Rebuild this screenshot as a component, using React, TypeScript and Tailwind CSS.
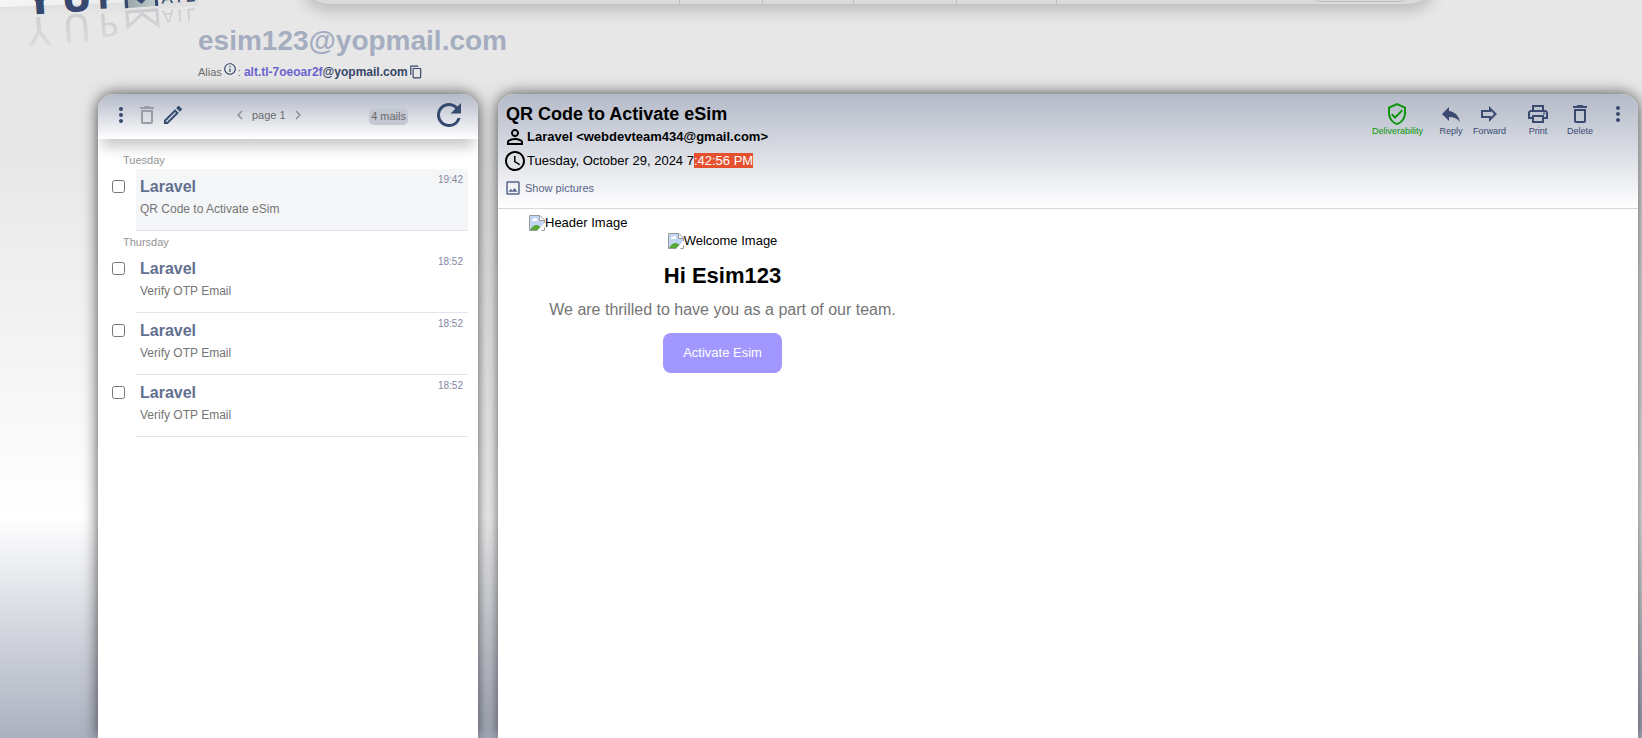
import type { ReactNode } from "react";
import {
  MdChevronLeft,
  MdChevronRight,
  MdContentCopy,
  MdDeleteOutline,
  MdInfoOutline,
  MdMoreVert,
  MdOutlineEdit,
  MdOutlineImage,
  MdOutlinePrint,
  MdPersonOutline,
  MdRefresh,
  MdReply,
  MdSchedule,
} from "react-icons/md";

type Mail = { id: number; from: string; subject: string; time: string; active?: boolean };

const days: { label: string; mails: Mail[] }[] = [
  {
    label: "Tuesday",
    mails: [{ id: 1, from: "Laravel", subject: "QR Code to Activate eSim", time: "19:42", active: true }],
  },
  {
    label: "Thursday",
    mails: [
      { id: 2, from: "Laravel", subject: "Verify OTP Email", time: "18:52" },
      { id: 3, from: "Laravel", subject: "Verify OTP Email", time: "18:52" },
      { id: 4, from: "Laravel", subject: "Verify OTP Email", time: "18:52" },
    ],
  },
];

function Letters() {
  return (
    <>
      <text x="26" y="14" fontSize="40">Y</text>
      <text x="62" y="14" fontSize="38">U</text>
      <text x="98" y="13" fontSize="32">P</text>
      <g fontWeight="400">
        <text x="162" y="12" fontSize="17">A</text>
        <text x="177" y="12" fontSize="17">I</text>
        <text x="186" y="12" fontSize="17">L</text>
      </g>
    </>
  );
}

function Logo() {
  return (
    <svg className="h-[50px] w-[198px] shrink-0" viewBox="0 0 198 50" aria-label="Yopmail" role="img">
      <defs>
        <linearGradient id="fade" gradientUnits="userSpaceOnUse" x1="0" y1="10" x2="0" y2="46">
          <stop offset="0" stopColor="#fff" stopOpacity="0.2" />
          <stop offset="1" stopColor="#fff" stopOpacity="0.08" />
        </linearGradient>
        <linearGradient id="glow" x1="0" y1="0" x2="1" y2="0">
          <stop offset="0" stopColor="#f5f5f5" />
          <stop offset="1" stopColor="#e7e7e7" />
        </linearGradient>
        <linearGradient id="floor" x1="0" y1="0" x2="0" y2="1">
          <stop offset="0" stopColor="#dcdcdc" />
          <stop offset="1" stopColor="#e7e7e7" stopOpacity="0" />
        </linearGradient>
        <linearGradient id="envelope" x1="0" y1="0" x2="1" y2="0">
          <stop offset="0" stopColor="#94a3a6" />
          <stop offset="1" stopColor="#c4cecf" />
        </linearGradient>
        <mask id="mirror">
          <rect width="198" height="42" y="6" fill="url(#fade)" />
        </mask>
      </defs>
      <path d="M0 7L190 0H198V6L0 22z" fill="url(#floor)" />
      <path d="M0 0H190L0 7z" fill="url(#glow)" />
      <g
        fill="#36486f"
        fontFamily="DejaVu Sans, sans-serif"
        fontWeight="700"
        transform="rotate(-4 42 14)"
      >
        <Letters />
        <path d="M125 -14h34v28h-34z" fill="url(#envelope)" />
        <path d="M127 14v-19l15 14l15-14v19" fill="none" stroke="#36486f" strokeWidth="3" />
      </g>
      <g mask="url(#mirror)">
        <g
          fill="#5a6170"
          fontFamily="DejaVu Sans, sans-serif"
          fontWeight="400"
          transform="rotate(-4 42 16) translate(0 31) scale(1 -1)"
        >
          <Letters />
          <path d="M127 13v-15l15 12l15-12v15z" fill="none" stroke="#5a6170" strokeWidth="3" />
        </g>
      </g>
    </svg>
  );
}

function ShieldIcon() {
  return (
    <svg viewBox="0 0 24 24" className="size-6" fill="currentColor" aria-hidden="true">
      <path d="M21 11C21 16.55 17.16 21.74 12 23C6.84 21.74 3 16.55 3 11V5L12 1L21 5V11M12 21C15.75 20 19 15.54 19 11.22V6.3L12 3.18L5 6.3V11.22C5 15.54 8.25 20 12 21M10 17L6 13L7.41 11.59L10 14.17L16.59 7.58L18 9" />
    </svg>
  );
}

function ForwardIcon() {
  return (
    <svg viewBox="0 0 24 24" className="size-6" fill="none" stroke="currentColor" strokeWidth="2" aria-hidden="true">
      <path d="M5 9h8V6.500l5.500 5.500l-5.500 5.500V15H5z" />
    </svg>
  );
}

function BrokenImage({ alt }: { alt: string }) {
  return (
    <span role="img" aria-label={alt} className="flex h-4 items-center text-[13px] leading-4 text-black">
      <svg viewBox="0 0 16 16" className="size-4 shrink-0" aria-hidden="true">
        <path d="M.5 .5H11L15.500 5V15.500H.5z" fill="#fff" />
        <path d="M1 1H10.500V5.500H15V8.500L8.500 15H1z" fill="#c3d5f5" />
        <path d="M3 6a1.500 1.500 0 0 1 1.500-2a2 2 0 0 1 3.500 2z" fill="#fff" />
        <path d="M1 15C2.500 12 5 10 7.500 10C9.500 10 10.500 11 11.500 12L8.500 15z" fill="#57a834" />
        <path d="M16 8L8.500 16H12L16 12z" fill="#fff" />
        <path d="M8.500 15.500H.5V.5H11L15.500 5V8M10.500 .5V5.500H15.500M15.500 12.500V15.500H12.500" fill="none" stroke="#9a9a9a" />
      </svg>
      {alt}
    </span>
  );
}

function Tool({ label, children, className }: { label: string; children: ReactNode; className: string }) {
  return (
    <button type="button" className={`flex flex-col items-center text-[9px] leading-[10px] ${className}`}>
      {children}
      {label}
    </button>
  );
}

function MailRow({ mail }: { mail: Mail }) {
  return (
    <li className="flex pr-[10px] pl-[14px]">
      <input
        type="checkbox"
        id={`mail-${mail.id}`}
        aria-label={`${mail.from}: ${mail.subject}`}
        className="mt-[11px] mr-[11px] size-[13px] shrink-0"
      />
      <label
        htmlFor={`mail-${mail.id}`}
        className={`flex h-[62px] flex-1 justify-between border-b border-[#e4e4e8] pr-[5px] pl-1 ${mail.active ? "bg-[#f4f6f8]" : ""}`}
      >
        <span className="flex flex-col pt-2">
          <span className="text-[16px] leading-5 font-bold text-[#62708f]">{mail.from}</span>
          <span className="mt-1 text-[12px] leading-4 text-[#757575]">{mail.subject}</span>
        </span>
        <span className="pt-[5px] text-[10px] leading-3 text-[#8287a0]">{mail.time}</span>
      </label>
    </li>
  );
}

function Inbox() {
  return (
    <aside className="flex w-[380px] shrink-0 flex-col overflow-hidden rounded-t-[16px] bg-white">
      <div className="flex h-[45px] shrink-0 items-center bg-linear-to-b from-[#b4bac8] to-white pb-[3px] pl-[11px] text-[#364a70] shadow-[0_12px_14px_-4px_rgba(0,0,0,0.22)]">
        <button type="button" aria-label="Menu"><MdMoreVert className="size-6" /></button>
        <button type="button" aria-label="Empty inbox" className="ml-[2px] text-[#9a9da5]"><MdDeleteOutline className="size-6" /></button>
        <button type="button" aria-label="New" className="ml-[2px]"><MdOutlineEdit className="size-6" /></button>
        <div className="ml-[46px] flex items-center text-[11px] text-[#6b6b6b]">
          <button type="button" aria-label="Previous page" className="text-[#8d9099]"><MdChevronLeft className="size-[18px]" /></button>
          <span className="mx-[3px]">page 1</span>
          <button type="button" aria-label="Next page" className="text-[#8d9099]"><MdChevronRight className="size-[18px]" /></button>
        </div>
        <span className="mt-[2px] ml-auto h-[17px] rounded-[5px] bg-[#c3c8d2] px-[2px] text-[11px] leading-[17px] text-[#6b6b6b]">4 mails</span>
        <button type="button" aria-label="Refresh" className="mr-[11px] ml-[23px]"><MdRefresh className="size-9" /></button>
      </div>
      <div className="pt-[10px]">
        {days.map((day) => (
          <section key={day.label}>
            <h2 className="h-5 pl-[25px] text-[11px] leading-[22px] text-[#949494]">{day.label}</h2>
            <ul>
              {day.mails.map((mail) => (
                <MailRow key={mail.id} mail={mail} />
              ))}
            </ul>
          </section>
        ))}
      </div>
    </aside>
  );
}

function Message() {
  return (
    <main className="flex flex-1 flex-col overflow-hidden rounded-t-[16px] bg-white">
      <header className="flex h-[115px] shrink-0 justify-between border-b border-[#d8d8d8] bg-linear-to-b from-[#b4bac8] to-white">
        <div className="flex flex-col items-start pt-2 pl-[5px]">
          <h2 className="pl-[3px] text-[18px] leading-6 font-bold text-black">QR Code to Activate eSim</h2>
          <p className="flex h-[22px] items-center text-[13px] font-bold text-black">
            <MdPersonOutline className="size-6" />
            Laravel &lt;webdevteam434@gmail.com&gt;
          </p>
          <p className="mt-px flex h-6 items-center text-[13px] text-black">
            <MdSchedule className="size-6" />
            <span>
              Tuesday, October 29, 2024 7<span className="bg-[#e5502f] text-white">:42:56 PM</span>
            </span>
          </p>
          <button type="button" className="mt-[5px] flex h-5 items-center gap-[3px] pl-px text-[11px] text-[#56658a]">
            <MdOutlineImage className="size-[18px]" />
            Show pictures
          </button>
        </div>
        <div className="flex items-start pt-2 pr-2 text-[#3a4a70]">
          <Tool label="Deliverability" className="text-[#0a960a]"><ShieldIcon /></Tool>
          <Tool label="Reply" className="ml-4"><MdReply className="size-6" /></Tool>
          <Tool label="Forward" className="ml-[10px]"><ForwardIcon /></Tool>
          <Tool label="Print" className="ml-5"><MdOutlinePrint className="size-6" /></Tool>
          <Tool label="Delete" className="ml-[17px]"><MdDeleteOutline className="size-6" /></Tool>
          <button type="button" aria-label="More" className="ml-[13px]"><MdMoreVert className="size-6" /></button>
        </div>
      </header>
      <article className="ml-[31px] flex w-[387px] flex-col items-center pt-[6px]">
        <div className="w-full"><BrokenImage alt="Header Image" /></div>
        <div className="mt-[2px]"><BrokenImage alt="Welcome Image" /></div>
        <h3 className="mt-[14px] text-[22px] leading-[26px] font-bold text-black">Hi Esim123</h3>
        <p className="mt-[11px] text-[16px] leading-5 text-[#757575]">We are thrilled to have you as a part of our team.</p>
        <a href="#activate" className="mt-[13px] rounded-lg bg-[#a197ff] px-5 text-[13px] leading-10 text-white">Activate Esim</a>
      </article>
    </main>
  );
}

export default function App() {
  return (
    <div className="flex min-h-screen flex-col overflow-hidden bg-linear-to-b from-[#e7e7e7] from-20% via-white via-70% to-[#abb1c0] font-['Liberation_Sans',Arial,sans-serif]">
      <header className="flex h-[94px] shrink-0 items-start">
        <Logo />
        <div className="flex-1">
          <nav className="-mt-10 mr-[205px] ml-[102px] flex h-11 items-stretch rounded-b-[30px] bg-[#dadada] shadow-[0_8px_14px_rgba(0,0,0,0.17)]">
            <span className="w-[380px] border-r border-[#bdbdbd]" />
            <span className="w-[83px] border-r border-[#bdbdbd]" />
            <span className="w-[91px] border-r border-[#bdbdbd]" />
            <span className="w-[103px] border-r border-[#bdbdbd]" />
            <span className="w-[100px] border-r border-[#bdbdbd]" />
            <span className="mr-8 mb-[2px] ml-auto w-[90px] rounded-[4px] border border-[#bdbdbd]" />
          </nav>
          <h1 className="mt-[21px] text-[28px] leading-8 font-bold text-[#a5adc0]">esim123@yopmail.com</h1>
          <p className="mt-[5px] flex h-5 items-center text-[12px] text-[#6b6b6b]">
            <span className="text-[11px]">Alias</span>
            <MdInfoOutline className="mx-px mb-[6px] size-[14px] text-[#364a70]" />
            <span className="mr-[3px] text-[11px]">:</span>
            <b className="text-[#6a63cf]">alt.tl-7oeoar2f</b>
            <b className="text-[#364668]">@yopmail.com</b>
            <button type="button" aria-label="Copy alias" className="ml-px text-[#364668]"><MdContentCopy className="size-[14px]" /></button>
          </p>
        </div>
      </header>
      <div className="flex flex-1 gap-5 pr-1 pl-[98px]">
        <div className="flex rounded-t-[16px] shadow-[0_0_15px_rgba(0,0,0,0.7)]"><Inbox /></div>
        <div className="flex flex-1 rounded-t-[16px] shadow-[0_0_15px_rgba(0,0,0,0.7)]"><Message /></div>
      </div>
    </div>
  );
}
